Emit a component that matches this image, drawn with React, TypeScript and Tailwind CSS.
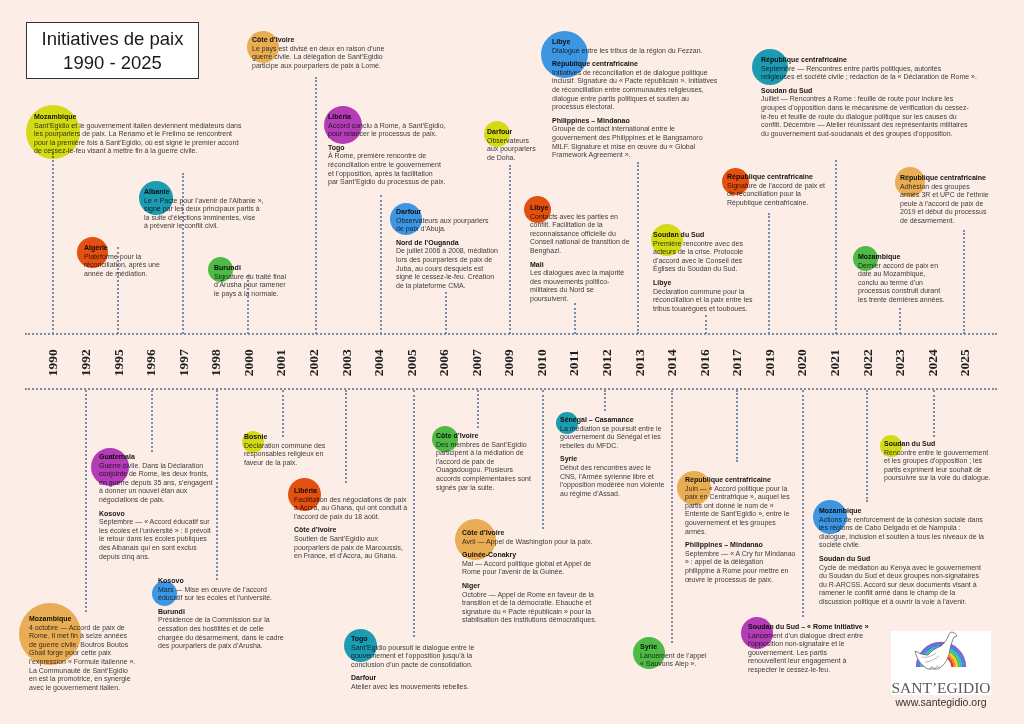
type Sec = { t: string; l: string[] };
type Item = { box: string; dot: string; s: Sec[] };

const years = [
  "1990", "1992", "1995", "1996", "1997", "1998", "2000", "2001", "2002", "2003",
  "2004", "2005", "2006", "2007", "2009", "2010", "2011", "2012", "2013", "2014",
  "2016", "2017", "2019", "2020", "2021", "2022", "2023", "2024", "2025",
];

// dotted links between the events and the axis
const links = [
  "left-[52px] top-[153px] h-[181px]",
  "left-[117px] top-[247px] h-[87px]",
  "left-[182px] top-[173px] h-[161px]",
  "left-[247px] top-[275px] h-[59px]",
  "left-[315px] top-[77px] h-[257px]",
  "left-[380px] top-[195px] h-[139px]",
  "left-[445px] top-[292px] h-[42px]",
  "left-[509px] top-[165px] h-[169px]",
  "left-[574px] top-[303px] h-[31px]",
  "left-[637px] top-[162px] h-[172px]",
  "left-[705px] top-[315px] h-[19px]",
  "left-[768px] top-[213px] h-[121px]",
  "left-[835px] top-[160px] h-[174px]",
  "left-[899px] top-[308px] h-[26px]",
  "left-[963px] top-[230px] h-[104px]",
  "left-[85px] top-[390px] h-[222px]",
  "left-[151px] top-[390px] h-[62px]",
  "left-[216px] top-[390px] h-[190px]",
  "left-[282px] top-[390px] h-[47px]",
  "left-[345px] top-[390px] h-[93px]",
  "left-[413px] top-[390px] h-[247px]",
  "left-[477px] top-[390px] h-[38px]",
  "left-[542px] top-[390px] h-[139px]",
  "left-[604px] top-[390px] h-[21px]",
  "left-[671px] top-[390px] h-[253px]",
  "left-[736px] top-[390px] h-[72px]",
  "left-[802px] top-[390px] h-[227px]",
  "left-[866px] top-[390px] h-[112px]",
  "left-[933px] top-[390px] h-[47px]",
];

// circle colours are lifted a little: they are multiplied over the peach paper
const YEL = "bg-[#d8eb18]";
const TEA = "bg-[#1da7c5]";
const RED = "bg-[#e75611]";
const MAG = "bg-[#b640c9]";
const BLU = "bg-[#3ea1fb]";
const GRN = "bg-[#50c84c]";
const TAN = "bg-[#ecba5e]";

const items: Item[] = [
  {
    box: "left-[252px] top-[36px]",
    dot: `left-[247px] top-[31px] size-[32px] ${TAN}`,
    s: [{ t: "Côte d’Ivoire", l: ["Le pays est divisé en deux en raison d’une", "guerre civile. La délégation de Sant’Egidio", "participe aux pourparlers de paix à Lomé."] }],
  },
  {
    box: "left-[34px] top-[113px]",
    dot: `left-[26px] top-[105px] size-[54px] ${YEL}`,
    s: [{ t: "Mozambique", l: ["Sant’Egidio et le gouvernement italien deviennent médiateurs dans", "les pourparlers de paix. La Renamo et le Frelimo se rencontrent", "pour la première fois à Sant’Egidio, où est signé le premier accord", "de cessez-le-feu visant à mettre fin à la guerre civile."] }],
  },
  {
    box: "left-[144px] top-[188px]",
    dot: `left-[139px] top-[181px] size-[34px] ${TEA}`,
    s: [{ t: "Albanie", l: ["Le « Pacte pour l’avenir de l’Albanie »,", "signé par les deux principaux partis à", "la suite d’élections imminentes, vise", "à prévenir le conflit civil."] }],
  },
  {
    box: "left-[84px] top-[244px]",
    dot: `left-[77px] top-[237px] size-[31px] ${RED}`,
    s: [{ t: "Algérie", l: ["Plateforme pour la", "réconciliation, après une", "année de médiation."] }],
  },
  {
    box: "left-[214px] top-[264px]",
    dot: `left-[208px] top-[257px] size-[25px] ${GRN}`,
    s: [{ t: "Burundi", l: ["Signature du traité final", "d’Arusha pour ramener", "le pays à la normale."] }],
  },
  {
    box: "left-[328px] top-[113px]",
    dot: `left-[324px] top-[106px] size-[38px] ${MAG}`,
    s: [
      { t: "Libéria", l: ["Accord conclu à Rome, à Sant’Egidio,", "pour relancer le processus de paix."] },
      { t: "Togo", l: ["À Rome, première rencontre de", "réconciliation entre le gouvernement", "et l’opposition, après la facilitation", "par Sant’Egidio du processus de paix."] },
    ],
  },
  {
    box: "left-[487px] top-[128px]",
    dot: `left-[484px] top-[121px] size-[26px] ${YEL}`,
    s: [{ t: "Darfour", l: ["Observateurs", "aux pourparlers", "de Doha."] }],
  },
  {
    box: "left-[396px] top-[208px]",
    dot: `left-[390px] top-[203px] size-[32px] ${BLU}`,
    s: [
      { t: "Darfour", l: ["Observateurs aux pourparlers", "de paix d’Abuja."] },
      { t: "Nord de l’Ouganda", l: ["De juillet 2006 à 2008, médiation", "lors des pourparlers de paix de", "Juba, au cours desquels est", "signé le cessez-le-feu. Création", "de la plateforme CMA."] },
    ],
  },
  {
    box: "left-[552px] top-[38px]",
    dot: `left-[541px] top-[31px] size-[47px] ${BLU}`,
    s: [
      { t: "Libye", l: ["Dialogue entre les tribus de la région du Fezzan."] },
      { t: "République centrafricaine", l: ["Initiatives de réconciliation et de dialogue politique", "inclusif. Signature du « Pacte républicain ». Initiatives", "de réconciliation entre communautés religieuses,", "dialogue entre partis politiques et soutien au", "processus électoral."] },
      { t: "Philippines – Mindanao", l: ["Groupe de contact international entre le", "gouvernement des Philippines et le Bangsamoro", "MILF. Signature et mise en œuvre du « Global", "Framework Agreement »."] },
    ],
  },
  {
    box: "left-[530px] top-[204px]",
    dot: `left-[524px] top-[196px] size-[27px] ${RED}`,
    s: [
      { t: "Libye", l: ["Contacts avec les parties en", "conflit. Facilitation de la", "reconnaissance officielle du", "Conseil national de transition de", "Benghazi."] },
      { t: "Mali", l: ["Les dialogues avec la majorité", "des mouvements politico-", "militaires du Nord se", "poursuivent."] },
    ],
  },
  {
    box: "left-[653px] top-[231px]",
    dot: `left-[651px] top-[224px] size-[32px] ${YEL}`,
    s: [
      { t: "Soudan du Sud", l: ["Première rencontre avec des", "acteurs de la crise. Protocole", "d’accord avec le Conseil des", "Églises du Soudan du Sud."] },
      { t: "Libye", l: ["Déclaration commune pour la", "réconciliation et la paix entre les", "tribus touarègues et touboues."] },
    ],
  },
  {
    box: "left-[761px] top-[56px]",
    dot: `left-[752px] top-[49px] size-[36px] ${TEA}`,
    s: [
      { t: "République centrafricaine", l: ["Septembre — Rencontres entre partis politiques, autorités", "religieuses et société civile ; rédaction de la « Déclaration de Rome »."] },
      { t: "Soudan du Sud", l: ["Juillet — Rencontres à Rome : feuille de route pour inclure les", "groupes d’opposition dans le mécanisme de vérification du cessez-", "le-feu et feuille de route du dialogue politique sur les causes du", "conflit. Décembre — Atelier réunissant des représentants militaires", "du gouvernement sud-soudanais et des groupes d’opposition."] },
    ],
  },
  {
    box: "left-[727px] top-[173px]",
    dot: `left-[722px] top-[168px] size-[27px] ${RED}`,
    s: [{ t: "République centrafricaine", l: ["Signature de l’accord de paix et", "de réconciliation pour la", "République centrafricaine."] }],
  },
  {
    box: "left-[900px] top-[174px]",
    dot: `left-[895px] top-[167px] size-[30px] ${TAN}`,
    s: [{ t: "République centrafricaine", l: ["Adhésion des groupes", "armés 3R et UPC de l’ethnie", "peule à l’accord de paix de", "2019 et début du processus", "de désarmement."] }],
  },
  {
    box: "left-[858px] top-[253px]",
    dot: `left-[853px] top-[246px] size-[25px] ${GRN}`,
    s: [{ t: "Mozambique", l: ["Dernier accord de paix en", "date au Mozambique,", "conclu au terme d’un", "processus construit durant", "les trente dernières années."] }],
  },
  {
    box: "left-[99px] top-[453px]",
    dot: `left-[91px] top-[448px] size-[38px] ${MAG}`,
    s: [
      { t: "Guatemala", l: ["Guerre civile. Dans la Déclaration", "conjointe de Rome, les deux fronts,", "en guerre depuis 35 ans, s’engagent", "à donner un nouvel élan aux", "négociations de paix."] },
      { t: "Kosovo", l: ["Septembre — « Accord éducatif sur", "les écoles et l’université » : il prévoit", "le retour dans les écoles publiques", "des Albanais qui en sont exclus", "depuis cinq ans."] },
    ],
  },
  {
    box: "left-[244px] top-[433px]",
    dot: `left-[242px] top-[431px] size-[22px] ${YEL}`,
    s: [{ t: "Bosnie", l: ["Déclaration commune des", "responsables religieux en", "faveur de la paix."] }],
  },
  {
    box: "left-[294px] top-[487px]",
    dot: `left-[288px] top-[478px] size-[33px] ${RED}`,
    s: [
      { t: "Libéria", l: ["Facilitation des négociations de paix", "à Accra, au Ghana, qui ont conduit à", "l’accord de paix du 18 août."] },
      { t: "Côte d’Ivoire", l: ["Soutien de Sant’Egidio aux", "pourparlers de paix de Marcoussis,", "en France, et d’Accra, au Ghana."] },
    ],
  },
  {
    box: "left-[436px] top-[432px]",
    dot: `left-[432px] top-[426px] size-[26px] ${GRN}`,
    s: [{ t: "Côte d’Ivoire", l: ["Des membres de Sant’Egidio", "participent à la médiation de", "l’accord de paix de", "Ouagadougou. Plusieurs", "accords complémentaires sont", "signés par la suite."] }],
  },
  {
    box: "left-[560px] top-[416px]",
    dot: `left-[556px] top-[412px] size-[22px] ${TEA}`,
    s: [
      { t: "Sénégal – Casamance", l: ["La médiation se poursuit entre le", "gouvernement du Sénégal et les", "rebelles du MFDC."] },
      { t: "Syrie", l: ["Début des rencontres avec le", "CNS, l’Armée syrienne libre et", "l’opposition modérée non violente", "au régime d’Assad."] },
    ],
  },
  {
    box: "left-[884px] top-[440px]",
    dot: `left-[880px] top-[435px] size-[22px] ${YEL}`,
    s: [{ t: "Soudan du Sud", l: ["Rencontre entre le gouvernement", "et les groupes d’opposition ; les", "partis expriment leur souhait de", "poursuivre sur la voie du dialogue."] }],
  },
  {
    box: "left-[685px] top-[476px]",
    dot: `left-[677px] top-[471px] size-[34px] ${TAN}`,
    s: [
      { t: "République centrafricaine", l: ["Juin — « Accord politique pour la", "paix en Centrafrique », auquel les", "partis ont donné le nom de «", "Entente de Sant’Egidio », entre le", "gouvernement et les groupes", "armés."] },
      { t: "Philippines – Mindanao", l: ["Septembre — « A Cry for Mindanao", "» : appel de la délégation", "philippine à Rome pour mettre en", "œuvre le processus de paix."] },
    ],
  },
  {
    box: "left-[819px] top-[507px]",
    dot: `left-[813px] top-[500px] size-[34px] ${BLU}`,
    s: [
      { t: "Mozambique", l: ["Actions de renforcement de la cohésion sociale dans", "les régions de Cabo Delgado et de Nampula :", "dialogue, inclusion et soutien à tous les niveaux de la", "société civile."] },
      { t: "Soudan du Sud", l: ["Cycle de médiation au Kenya avec le gouvernement", "du Soudan du Sud et deux groupes non-signataires", "du R-ARCSS. Accord sur deux documents visant à", "ramener le conflit armé dans le champ de la", "discussion politique et à ouvrir la voie à l’avenir."] },
    ],
  },
  {
    box: "left-[158px] top-[577px]",
    dot: `left-[152px] top-[581px] size-[25px] ${BLU}`,
    s: [
      { t: "Kosovo", l: ["Mars — Mise en œuvre de l’accord", "éducatif sur les écoles et l’université."] },
      { t: "Burundi", l: ["Présidence de la Commission sur la", "cessation des hostilités et de celle", "chargée du désarmement, dans le cadre", "des pourparlers de paix d’Arusha."] },
    ],
  },
  {
    box: "left-[29px] top-[615px]",
    dot: `left-[19px] top-[603px] size-[62px] ${TAN}`,
    s: [{ t: "Mozambique", l: ["4 octobre — Accord de paix de", "Rome. Il met fin à seize années", "de guerre civile. Boutros Boutos", "Ghali forge pour cette paix", "l’expression « Formule italienne ».", "La Communauté de Sant’Egidio", "en est la promotrice, en synergie", "avec le gouvernement italien."] }],
  },
  {
    box: "left-[462px] top-[529px]",
    dot: `left-[455px] top-[519px] size-[41px] ${TAN}`,
    s: [
      { t: "Côte d’Ivoire", l: ["Avril — Appel de Washington pour la paix."] },
      { t: "Guinée-Conakry", l: ["Mai — Accord politique global et Appel de", "Rome pour l’avenir de la Guinée."] },
      { t: "Niger", l: ["Octobre — Appel de Rome en faveur de la", "transition et de la démocratie. Ebauche et", "signature du « Pacte républicain » pour la", "stabilisation des institutions démocratiques."] },
    ],
  },
  {
    box: "left-[351px] top-[635px]",
    dot: `left-[344px] top-[629px] size-[33px] ${TEA}`,
    s: [
      { t: "Togo", l: ["Sant’Egidio poursuit le dialogue entre le", "gouvernement et l’opposition jusqu’à la", "conclusion d’un pacte de consolidation."] },
      { t: "Darfour", l: ["Atelier avec les mouvements rebelles."] },
    ],
  },
  {
    box: "left-[640px] top-[643px]",
    dot: `left-[633px] top-[637px] size-[32px] ${GRN}`,
    s: [{ t: "Syrie", l: ["Lancement de l’appel", "« Sauvons Alep »."] }],
  },
  {
    box: "left-[748px] top-[623px]",
    dot: `left-[741px] top-[617px] size-[32px] ${MAG}`,
    s: [{ t: "Soudan du Sud – « Rome Initiative »", l: ["Lancement d’un dialogue direct entre", "l’opposition non-signataire et le", "gouvernement. Les partis", "renouvellent leur engagement à", "respecter le cessez-le-feu."] }],
  },
];

const rainbow = ["#8a5cc8", "#3b82e0", "#35b6cc", "#5cbf48", "#f0d323", "#f18a22", "#e23a2e"];

function Logo() {
  return (
    <div className="absolute left-[891px] top-[631px] flex flex-col items-center">
      <div className="flex h-[64px] w-[100px] flex-col items-center bg-white">
        <svg width="100" height="46" viewBox="0 0 100 46">
          {rainbow.map((c, i) => {
            const r = 24 - i * 2.1;
            return (
              <path
                key={c}
                d={`M${50 - r} 36 A${r} ${r} 0 0 1 ${50 + r} 36`}
                fill="none"
                stroke={c}
                strokeWidth="2.3"
              />
            );
          })}
          <path
            d="M60 1 C63 1 65 3 66 5 L63 6 C61 10 60 14 59 18 C58 26 55 32 50 36 L47 38 L37 38 C33 36 30 33 28 30 C26 27 25 24 24 20 C29 23 33 24 37 24 C40 20 45 17 50 15 C54 12 57 7 58 3 Z"
            fill="#ffffff"
            stroke="#555555"
            strokeWidth="0.7"
          />
          <path d="M31 26 C36 27 41 25 45 22 M34 31 C39 31 44 28 48 25" fill="none" stroke="#777777" strokeWidth="0.5" />
          <path d="M39 38 C40 35 42 35 43 38 M44 38 C45 35 47 35 48 37" fill="none" stroke="#555555" strokeWidth="0.6" />
        </svg>
        <div className="mt-[3px] font-['Liberation_Serif',serif] text-[15.5px] leading-[15px] text-[#5a5a5a]">
          SANT’EGIDIO
        </div>
      </div>
      <div className="mt-[1px] text-[10.5px] leading-[13px] text-[#333333]">www.santegidio.org</div>
    </div>
  );
}

export default function App() {
  return (
    <div className="relative isolate h-[724px] w-[1024px] overflow-hidden bg-[#fcede6] font-['Liberation_Sans',Arial,sans-serif]">
      <div className="ml-[26px] mt-[22px] flex h-[57px] w-[173px] flex-col items-center justify-center border-[1.5px] border-[#333333] bg-white text-[18.5px] leading-[24px] text-[#1a1a1a]">
        <div>Initiatives de paix</div>
        <div>1990 - 2025</div>
      </div>

      <div className="ml-[25px] mt-[254px] w-[972px] border-y-2 border-dotted border-[#7a8cab]">
        <div className="ml-[11.7px] grid h-[53px] grid-cols-[repeat(29,32.57px)] pt-[3px]">
          {years.map((y) => (
            <div key={y} className="flex items-center justify-center">
              <span className="-rotate-90 whitespace-nowrap font-['Liberation_Serif',serif] text-[13.5px] font-bold leading-none text-[#1e1e1e]">
                {y}
              </span>
            </div>
          ))}
        </div>
      </div>

      {links.map((l) => (
        <div key={l} className={`absolute w-0 border-l-2 border-dotted border-[#7a8cab] ${l}`} />
      ))}

      {items.map((it, i) => (
        <div key={i}>
          <div className={`absolute whitespace-nowrap text-[7px] leading-[8.6px] text-[#3c3c3c] ${it.box}`}>
            {it.s.map((s, j) => (
              <div key={j} className={j ? "mt-[5px]" : ""}>
                <div className="font-bold text-[#161616]">{s.t}</div>
                {s.l.map((l, k) => (
                  <div key={k}>{l}</div>
                ))}
              </div>
            ))}
          </div>
          <div className={`absolute rounded-full mix-blend-multiply ${it.dot}`} />
        </div>
      ))}

      <Logo />
    </div>
  );
}
